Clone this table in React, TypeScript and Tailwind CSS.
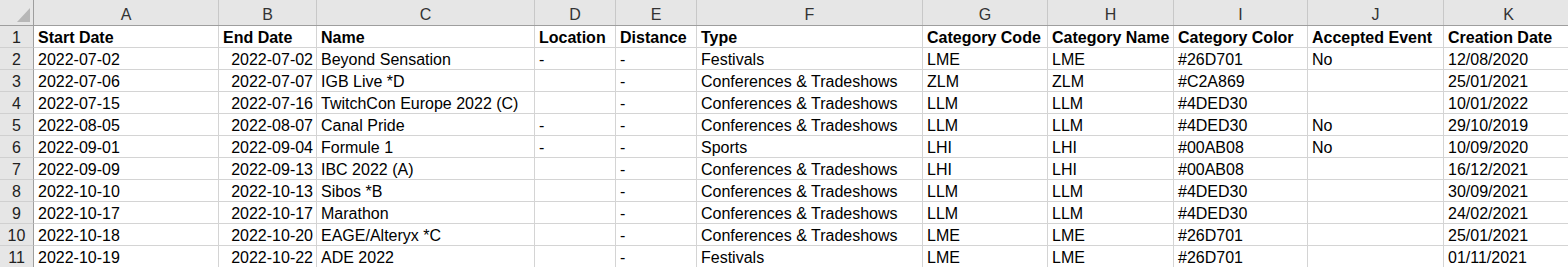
import React from 'react';

const cols = [
  { key: 'A', w: 'w-[185px]' },
  { key: 'B', w: 'w-[98px]' },
  { key: 'C', w: 'w-[218px]' },
  { key: 'D', w: 'w-[81px]' },
  { key: 'E', w: 'w-[81px]' },
  { key: 'F', w: 'w-[226px]' },
  { key: 'G', w: 'w-[125px]' },
  { key: 'H', w: 'w-[126px]' },
  { key: 'I', w: 'w-[134px]' },
  { key: 'J', w: 'w-[136px]' },
  { key: 'K', w: 'w-[130px]' },
];

const header = [
  'Start Date', 'End Date', 'Name', 'Location', 'Distance', 'Type',
  'Category Code', 'Category Name', 'Category Color', 'Accepted Event', 'Creation Date',
];

const CT = 'Conferences & Tradeshows';

const rows: string[][] = [
  ['2022-07-02', '2022-07-02', 'Beyond Sensation', '-', '-', 'Festivals', 'LME', 'LME', '#26D701', 'No', '12/08/2020'],
  ['2022-07-06', '2022-07-07', 'IGB Live *D', '', '-', CT, 'ZLM', 'ZLM', '#C2A869', '', '25/01/2021'],
  ['2022-07-15', '2022-07-16', 'TwitchCon Europe 2022 (C)', '', '-', CT, 'LLM', 'LLM', '#4DED30', '', '10/01/2022'],
  ['2022-08-05', '2022-08-07', 'Canal Pride', '-', '-', CT, 'LLM', 'LLM', '#4DED30', 'No', '29/10/2019'],
  ['2022-09-01', '2022-09-04', 'Formule 1', '-', '-', 'Sports', 'LHI', 'LHI', '#00AB08', 'No', '10/09/2020'],
  ['2022-09-09', '2022-09-13', 'IBC 2022 (A)', '', '-', CT, 'LHI', 'LHI', '#00AB08', '', '16/12/2021'],
  ['2022-10-10', '2022-10-13', 'Sibos *B', '', '-', CT, 'LLM', 'LLM', '#4DED30', '', '30/09/2021'],
  ['2022-10-17', '2022-10-17', 'Marathon', '', '-', CT, 'LLM', 'LLM', '#4DED30', '', '24/02/2021'],
  ['2022-10-18', '2022-10-20', 'EAGE/Alteryx *C', '', '-', CT, 'LME', 'LME', '#26D701', '', '25/01/2021'],
  ['2022-10-19', '2022-10-22', 'ADE 2022', '', '-', 'Festivals', 'LME', 'LME', '#26D701', '', '01/11/2021'],
];

function RowNum({ n }: { n: number }) {
  return (
    <div className="w-[34px] shrink-0 h-full flex items-end justify-center bg-[#e6e6e6] border-r border-r-[#9e9e9e] border-b border-b-[#d0d0d0] text-[#222]">
      {n}
    </div>
  );
}

export default function App() {
  return (
    <div
      className="w-[1568px] h-[267px] overflow-hidden bg-white text-[16px] leading-[18px] text-black"
      style={{ fontFamily: '"Liberation Sans", Arial, sans-serif' }}
    >
      <div className="flex h-[26px] w-max bg-[#e6e6e6] border-b border-b-[#9e9e9e]">
        <div className="w-[34px] shrink-0 h-full relative border-r border-r-[#9e9e9e]">
          <svg className="absolute left-[17px] top-[8px]" width="13" height="14" viewBox="0 0 13 14">
            <polygon points="13,0 13,14 0,14" fill="#b7b7b7" />
          </svg>
        </div>
        {cols.map((c) => (
          <div
            key={c.key}
            className={`${c.w} shrink-0 h-full flex items-end justify-center pb-[1px] text-[#333] border-r border-r-[#c8c8c8]`}
          >
            {c.key}
          </div>
        ))}
      </div>

      <div className="flex h-[22px] w-max">
        <RowNum n={1} />
        {cols.map((c, i) => (
          <div
            key={c.key}
            className={`${c.w} shrink-0 h-full flex items-end pl-[4px] font-bold whitespace-nowrap overflow-hidden border-r border-b border-[#d4d4d4]`}
          >
            {header[i]}
          </div>
        ))}
      </div>

      {rows.map((r, ri) => (
        <div key={ri} className="flex h-[22px] w-max">
          <RowNum n={ri + 2} />
          {cols.map((c, i) => (
            <div
              key={c.key}
              className={`${c.w} shrink-0 h-full flex items-end whitespace-nowrap overflow-hidden border-r border-b border-[#d4d4d4] ${
                i === 1 ? 'justify-end pr-[3px]' : 'pl-[4px]'
              }`}
            >
              {r[i]}
            </div>
          ))}
        </div>
      ))}
    </div>
  );
}
